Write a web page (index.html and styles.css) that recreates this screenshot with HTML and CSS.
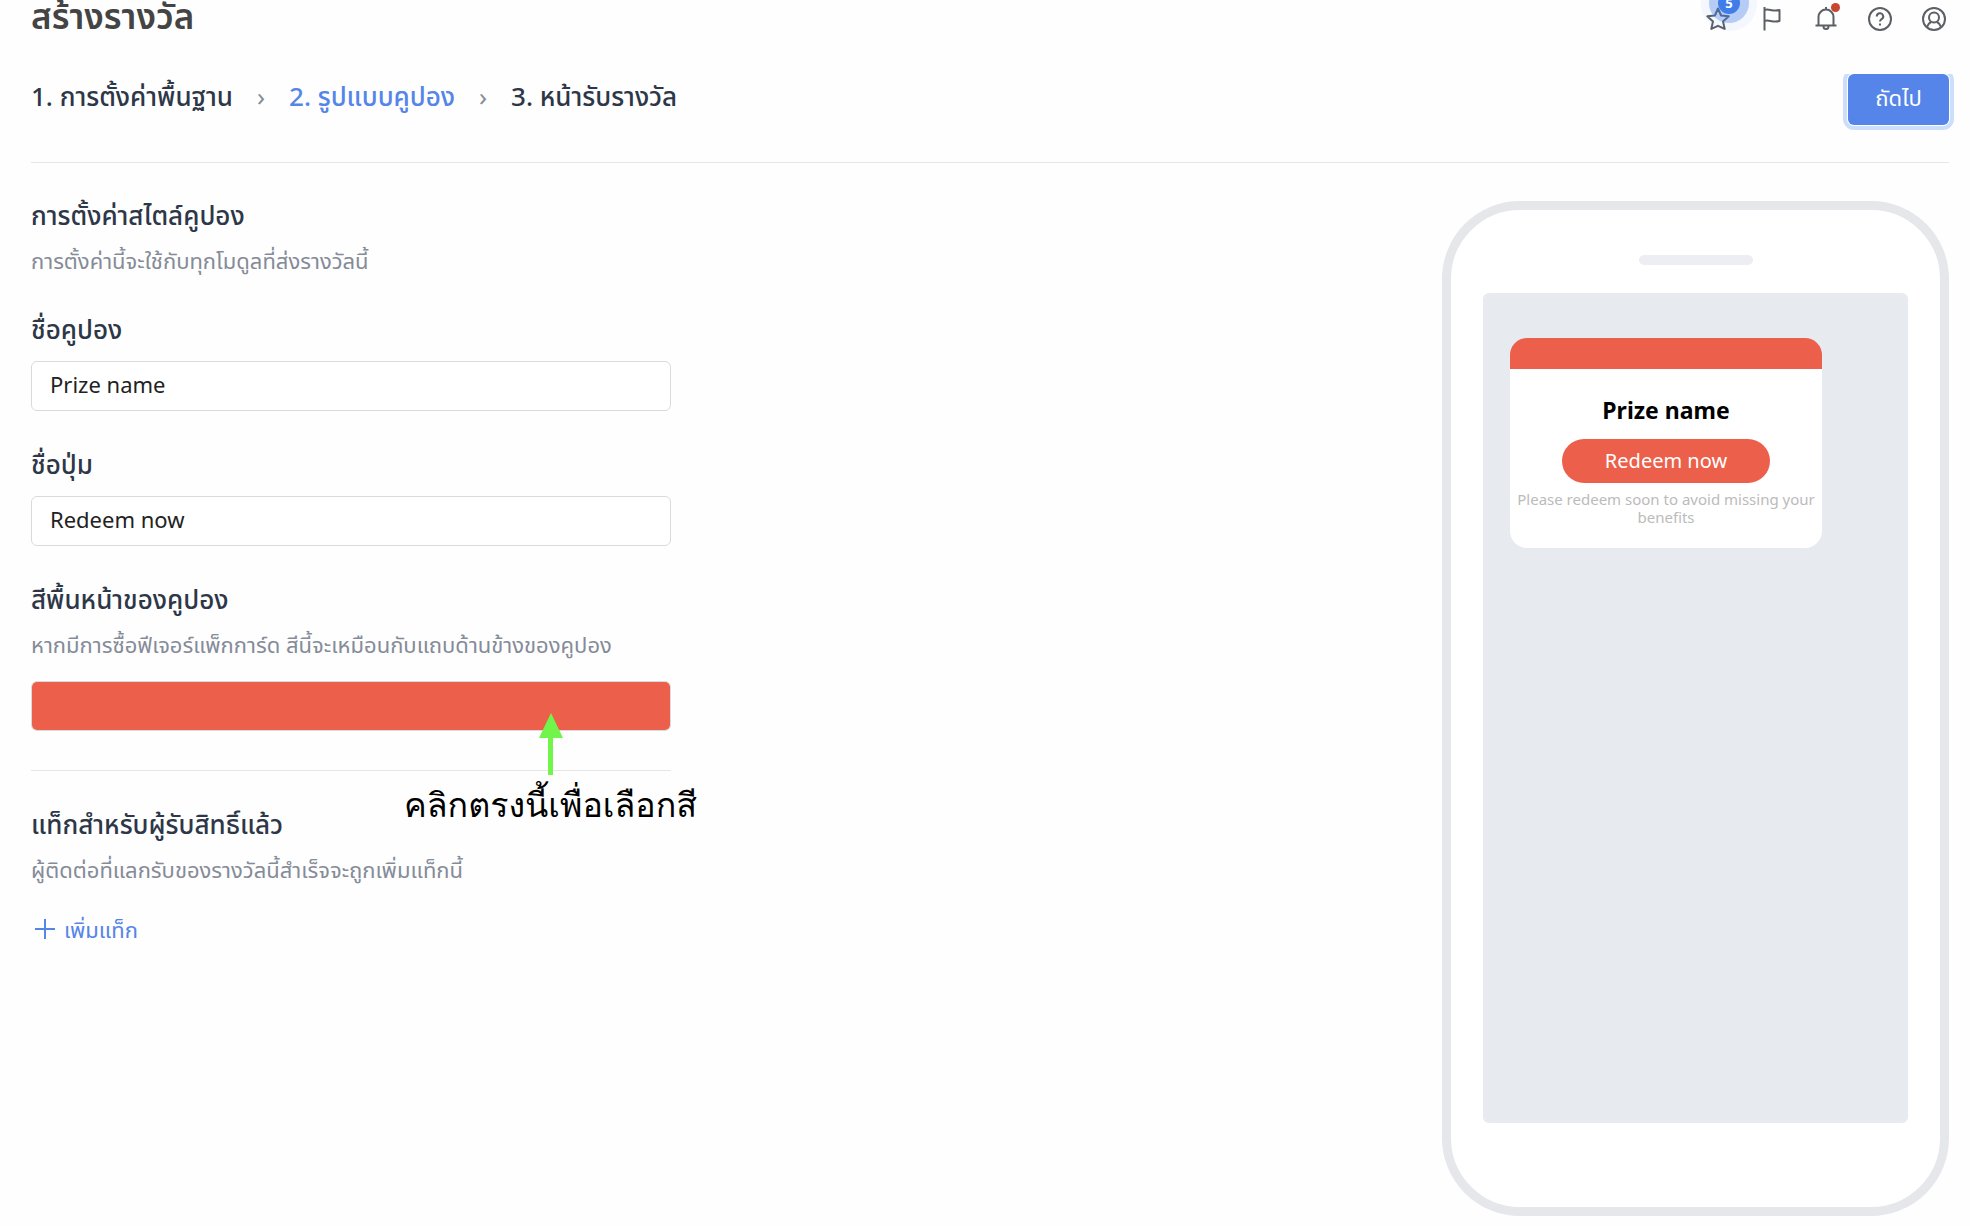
FILE: index.html
```html
<!DOCTYPE html>
<html lang="th">
<head>
  <meta charset="UTF-8">
  <meta name="viewport" content="width=device-width, initial-scale=1.0">
  <title>สร้างรางวัล</title>
  <link rel="stylesheet" href="styles.css">
</head>
<body>
  <header class="topbar">
    <h1>สร้างรางวัล</h1>
    <div class="tools">
      <button class="tool" aria-label="Favorites">
        <svg viewBox="0 0 24 24"><path d="M12 1.500l3.100 7 7.600.800-5.700 5.100 1.700 7.500-6.700-3.100-6.700 3.100L7 14.400 1.300 9.300l7.600-.800z"/></svg>
        <span class="badge">5</span>
      </button>
      <button class="tool" aria-label="Flag">
        <svg viewBox="0 0 24 24"><path d="M4.500 23.500V0M4.500 3c4-2 8 2 15 0v11c-7 2-11-2-15 0"/></svg>
      </button>
      <button class="tool" aria-label="Notifications">
        <svg viewBox="0 0 24 24"><path d="M1.500 18.500h21M4.500 18.500V10a7.500 7.500 0 0 1 15 0v8.500M12 2.500V0M9.500 19.500a2.500 2.500 0 0 0 5 0"/></svg>
        <span class="dot"></span>
      </button>
      <button class="tool" aria-label="Help">
        <svg viewBox="0 0 24 24"><circle cx="12" cy="12" r="11"/><path d="M8.800 9.500a3.200 3.200 0 1 1 4.800 2.700c-1.100.700-1.600 1.200-1.600 2.300"/><path d="M12 16.400v2.200"/></svg>
      </button>
      <button class="tool" aria-label="Account">
        <svg viewBox="0 0 24 24"><circle cx="12" cy="12" r="11"/><circle cx="12" cy="10.500" r="5"/><path d="M5 20c.800-2.500 2-4 4-5M19 20c-.800-2.500-2-4-4-5"/></svg>
      </button>
    </div>
  </header>

  <nav class="steps">
    <ol>
      <li>1. การตั้งค่าพื้นฐาน</li>
      <li class="active">2. รูปแบบคูปอง</li>
      <li>3. หน้ารับรางวัล</li>
    </ol>
    <button class="next-btn">ถัดไป</button>
  </nav>

  <main class="content">
    <form class="settings">
      <section class="group">
        <h2>การตั้งค่าสไตล์คูปอง</h2>
        <p class="hint">การตั้งค่านี้จะใช้กับทุกโมดูลที่ส่งรางวัลนี้</p>
      </section>
      <div class="group">
        <label for="coupon-name">ชื่อคูปอง</label>
        <input type="text" id="coupon-name" value="Prize name">
      </div>
      <div class="group">
        <label for="button-name">ชื่อปุ่ม</label>
        <input type="text" id="button-name" value="Redeem now">
      </div>
      <div class="group color-group">
        <label for="coupon-color">สีพื้นหน้าของคูปอง</label>
        <p class="hint">หากมีการซื้อฟีเจอร์แพ็กการ์ด สีนี้จะเหมือนกับแถบด้านข้างของคูปอง</p>
        <input type="color" id="coupon-color" value="#ec604b">
        <div class="callout">
          <svg viewBox="0 0 24 62"><path d="M12 0l12 25H14v37H9V25H0z"/></svg>
          <span>คลิกตรงนี้เพื่อเลือกสี</span>
        </div>
      </div>
      <section class="group">
        <h2>แท็กสำหรับผู้รับสิทธิ์แล้ว</h2>
        <p class="hint">ผู้ติดต่อที่แลกรับของรางวัลนี้สำเร็จจะถูกเพิ่มแท็กนี้</p>
        <button type="button" class="add-btn">
          <svg viewBox="0 0 20 20"><path d="M10 0v20M0 10h20"/></svg>
          เพิ่มแท็ก
        </button>
      </section>
    </form>

    <aside class="phone">
      <div class="speaker"></div>
      <div class="screen">
        <div class="coupon">
          <h3>Prize name</h3>
          <button class="redeem-btn">Redeem now</button>
          <p>Please redeem soon to avoid missing your benefits</p>
        </div>
      </div>
    </aside>
  </main>
</body>
</html>
```
FILE: styles.css
```css
* {
  box-sizing: border-box;
}
body {
  margin: 0;
  padding: 0 21px 0 31px;
  font-family: 'Noto Sans', 'Noto Sans Thai', sans-serif;
  font-size: 22px;
  line-height: 32px;
  color: #2d3748;
  background: #fefefe;
}
h1, h2, h3, p, ol {
  margin: 0;
  padding: 0;
}
button, input {
  font-family: inherit;
}
button {
  border: none;
  background: none;
  padding: 0;
  cursor: pointer;
}
.topbar {
  display: flex;
  justify-content: space-between;
  height: 74px;
}
.topbar h1 {
  font-size: 35px;
  line-height: 32px;
  font-weight: 600;
  color: #444;
}
.tools {
  display: flex;
  gap: 30px;
  padding: 7px 3px 0 0;
}
.tool {
  position: relative;
  width: 24px;
  height: 24px;
}
.tool svg {
  display: block;
  fill: none;
  stroke: #5b5f66;
  stroke-width: 2;
  stroke-linejoin: round;
}
.badge {
  position: absolute;
  top: -15px;
  left: 12px;
  width: 22px;
  height: 22px;
  border-radius: 50%;
  background: #3f7ee8;
  box-shadow: 0 0 0 9px rgba(63, 126, 232, 0.35), 0 0 0 17px rgba(63, 126, 232, 0.05);
  color: white;
  font-size: 13px;
  font-weight: 700;
  line-height: 22px;
}
.dot {
  position: absolute;
  top: -4px;
  right: -2px;
  width: 9px;
  height: 9px;
  border-radius: 50%;
  background: #c8452f;
}
.steps {
  display: flex;
  justify-content: space-between;
  align-items: flex-start;
  height: 89px;
  border-bottom: 1px solid #e5e6e8;
}
.steps ol {
  display: flex;
  list-style: none;
  font-size: 26px;
  line-height: 44px;
  font-weight: 500;
}
.steps li + li::before {
  content: '›';
  margin: 0 24px;
  font-weight: 400;
  color: #858b98;
}
.steps .active {
  color: #5585e8;
}
.next-btn {
  width: 101px;
  height: 51px;
  padding-bottom: 2px;
  border-radius: 6px;
  background: #5585e8;
  box-shadow: 0 0 0 1px white, 0 0 0 5px #cbdffd;
  clip-path: inset(0 -5px -5px);
  color: white;
  font-size: 22px;
}
.content {
  display: flex;
  justify-content: space-between;
  padding-top: 38px;
}
.settings {
  width: 640px;
}
.group {
  margin-bottom: 39px;
}
.group h2, .group label {
  display: block;
  font-size: 26px;
  line-height: 28px;
  font-weight: 500;
}
.hint {
  margin-top: 15px;
  color: #858b98;
}
.group input {
  display: block;
  width: 100%;
  height: 50px;
  margin-top: 18px;
  padding: 0 18px 4px;
  border: 1px solid #d9dadd;
  border-radius: 6px;
  background: white;
  font-size: 22px;
  color: #222;
}
.group input[type="color"] {
  margin-top: 21px;
  padding: 0;
  overflow: hidden;
}
input[type="color"]::-webkit-color-swatch-wrapper {
  padding: 0;
}
input[type="color"]::-webkit-color-swatch {
  border: none;
}
.color-group {
  position: relative;
  padding-bottom: 39px;
  border-bottom: 1px solid #e5e6e8;
}
.callout {
  position: absolute;
  top: 128px;
  left: 373px;
  display: flex;
  flex-direction: column;
  align-items: center;
  font-family: 'Loma', 'Garuda', 'Waree', 'Noto Serif Thai', serif;
  font-size: 34px;
  line-height: 60px;
  color: black;
  white-space: nowrap;
}
.callout svg {
  width: 24px;
  height: 62px;
  fill: #72f54a;
}
.add-btn {
  display: flex;
  align-items: center;
  gap: 9px;
  margin-top: 28px;
  padding-left: 4px;
  font-size: 22px;
  line-height: 32px;
  color: #5585e8;
}
.add-btn svg {
  width: 20px;
  height: 20px;
  stroke: #5585e8;
  stroke-width: 2;
}
.phone {
  width: 507px;
  height: 1015px;
  padding: 45px 32px 0;
  border: 9px solid #e6e7eb;
  border-radius: 78px;
  background: white;
}
.speaker {
  width: 114px;
  height: 10px;
  margin: 0 auto 28px;
  border-radius: 5px;
  background: #edeef3;
}
.screen {
  height: 830px;
  padding: 45px 27px;
  border-radius: 6px;
  background: #e7eaef;
}
.coupon {
  width: 312px;
  height: 210px;
  padding-top: 25px;
  border-top: 31px solid #ec604b;
  border-radius: 17px;
  background: white;
  text-align: center;
}
.coupon h3 {
  font-size: 23px;
  line-height: 32px;
  color: black;
}
.redeem-btn {
  display: block;
  width: 208px;
  height: 44px;
  margin: 13px auto 7px;
  padding-bottom: 2px;
  border-radius: 22px;
  background: #ec604b;
  color: white;
  font-size: 20px;
}
.coupon p {
  padding: 0 4px;
  font-size: 15px;
  line-height: 18px;
  color: #bbb;
}
```
